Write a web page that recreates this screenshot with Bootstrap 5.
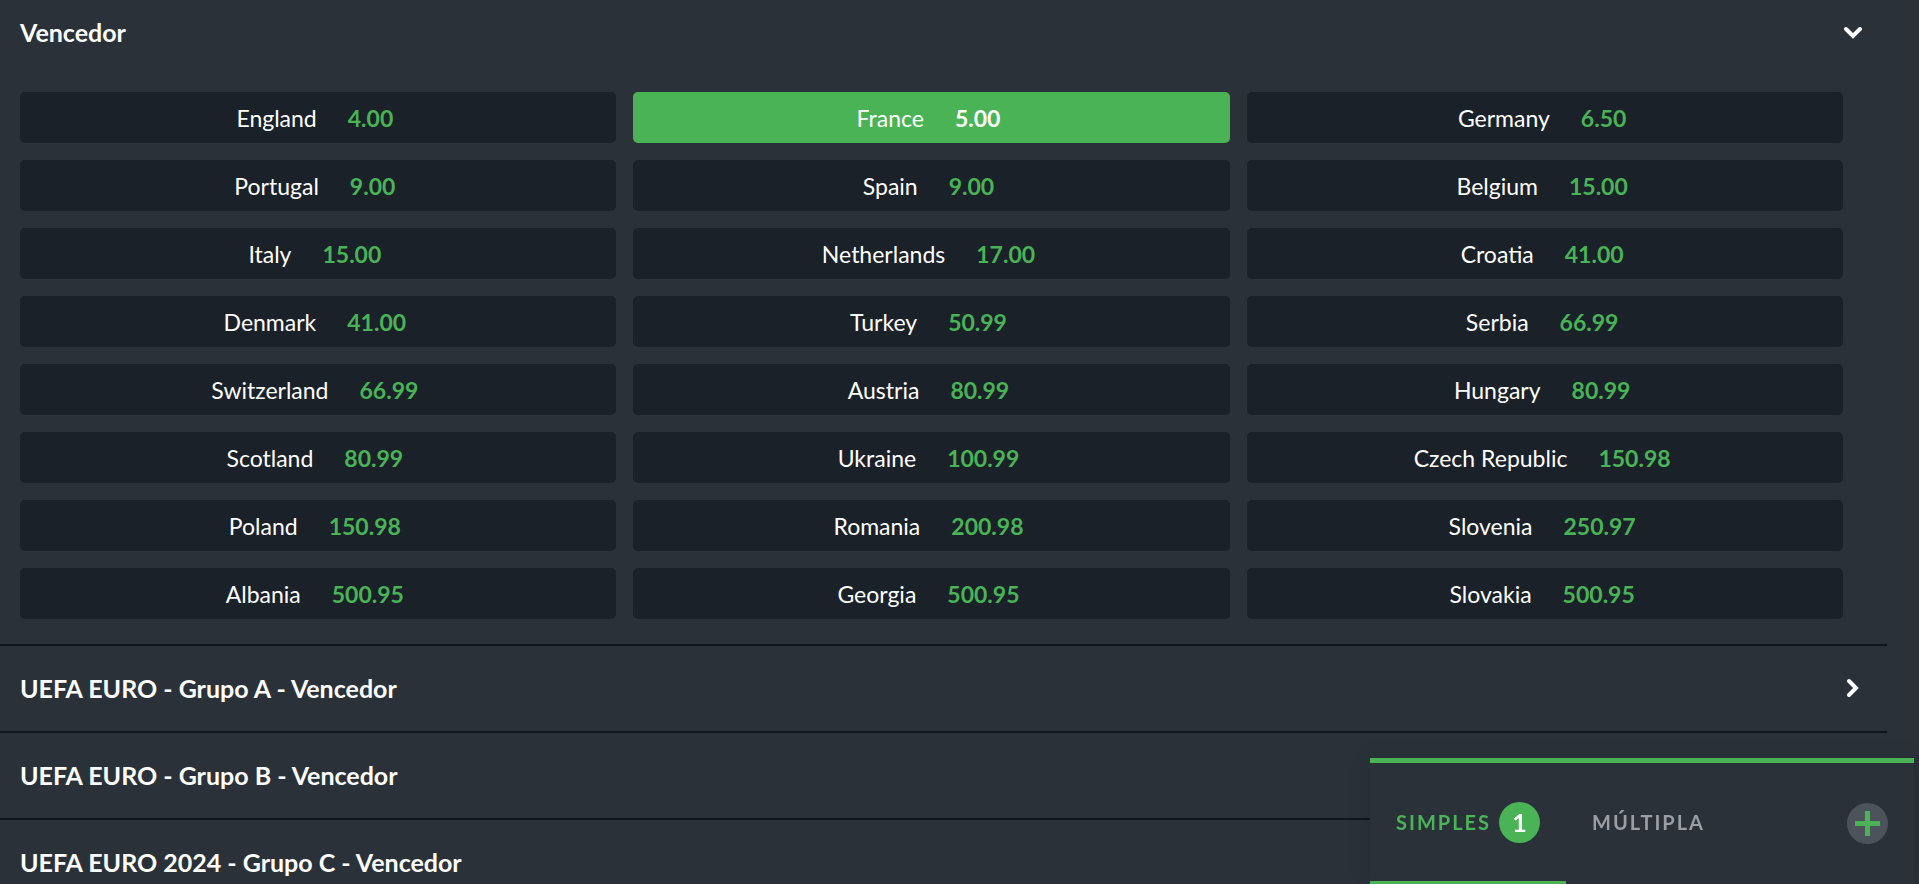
<!DOCTYPE html>
<html lang="pt-BR">
<head>
<meta charset="utf-8">
<meta name="viewport" content="width=device-width, initial-scale=1">
<title>UEFA EURO - Vencedor</title>
<link href="https://cdn.jsdelivr.net/npm/bootstrap@5.3.0/dist/css/bootstrap.min.css" rel="stylesheet">
<style>
  :root { --page: #2b3139; --cell: #1a2129; --line: #10151c; --accent: #49b356; }
  body { background: var(--page); color: #fff; font-family: Lato, "Liberation Sans", sans-serif; font-size: 23px; line-height: 28px; font-variant-ligatures: none; }
  .markets { margin-right: 32px; padding-bottom: 160px; }
  .board { scrollbar-width: none; }
  .board::-webkit-scrollbar { display: none; }
  .market + .market { border-top: 2px solid var(--line); }
  .market-head { width: 100%; padding: 28px 20px 29px; background: none; border: 0; color: #fff; font-weight: 700; font-size: 25px; text-align: left; }
  .market-open .market-head { padding-top: 18px; padding-bottom: 18px; }
  .market-head svg { width: 30px; height: 24px; flex: none; }
  .odds-grid { --bs-gutter-x: 17px; --bs-gutter-y: 17px; margin-right: 0; margin-left: 0; padding: 28px 35px 25px 11px; }
  .pick { width: 100%; height: 51px; gap: 31px; padding: 0 6px 0 0; background: var(--cell); border: 0; border-radius: 5px; color: #fff; }
  .pick b { color: var(--accent); font-weight: 700; }
  .pick[aria-pressed="true"] { background: var(--accent); }
  .pick[aria-pressed="true"] b { color: #fff; }
  .slip { right: 5px; bottom: 0; width: 544px; height: 126px; background: var(--page); border-top: 5px solid var(--accent); box-shadow: 0 0 20px rgba(0, 0, 0, .12); }
  .slip-tab { padding: 0 26px; background: none; border: 0; border-bottom: 3px solid transparent; color: #9a9ea3; font-weight: 700; font-size: 20px; letter-spacing: 2px; }
  .slip-tab[aria-selected="true"] { color: var(--accent); border-color: var(--accent); gap: 8px; }
  .count { width: 41px; height: 41px; background: var(--accent); color: #fff; font-size: 25px; letter-spacing: 0; }
  .add { width: 41px; height: 41px; margin-right: 26px; background: #4d535b; border: 0; }
</style>
</head>
<body>
<main class="board vh-100 overflow-auto">
  <div class="markets">
    <section class="market market-open">
      <button type="button" class="market-head d-flex align-items-center justify-content-between" aria-expanded="true">Vencedor
        <svg viewBox="0 0 30 24" fill="none" stroke="#fff" stroke-width="4" stroke-linecap="round" aria-hidden="true"><path d="M9 9l7 7 7-7"/></svg>
      </button>
      <div class="odds-grid row row-cols-3" id="odds"></div>
    </section>
    <section class="market">
      <button type="button" class="market-head d-flex align-items-center justify-content-between" aria-expanded="false">UEFA EURO - Grupo A - Vencedor
        <svg viewBox="0 0 30 24" fill="none" stroke="#fff" stroke-width="4" stroke-linecap="round" aria-hidden="true"><path d="M12 5l7 7-7 7"/></svg>
      </button>
    </section>
    <section class="market">
      <button type="button" class="market-head d-flex align-items-center justify-content-between" aria-expanded="false">UEFA EURO - Grupo B - Vencedor</button>
    </section>
    <section class="market">
      <button type="button" class="market-head d-flex align-items-center justify-content-between" aria-expanded="false">UEFA EURO 2024 - Grupo C - Vencedor</button>
    </section>
  </div>
</main>
<aside class="slip position-fixed d-flex" aria-label="Boletim de apostas">
  <div class="d-flex flex-grow-1" role="tablist">
    <button type="button" role="tab" aria-selected="true" class="slip-tab d-flex align-items-center">SIMPLES <span class="count rounded-circle d-flex align-items-center justify-content-center">1</span></button>
    <button type="button" role="tab" aria-selected="false" class="slip-tab">MÚLTIPLA</button>
  </div>
  <button type="button" class="add rounded-circle p-0 align-self-center d-flex align-items-center justify-content-center" aria-label="Adicionar">
    <svg width="25" height="25" viewBox="0 0 25 25" stroke="#49b356" stroke-width="5" aria-hidden="true"><path d="M12.5 0v25M0 12.5h25"/></svg>
  </button>
</aside>
<script src="https://cdn.jsdelivr.net/npm/bootstrap@5.3.0/dist/js/bootstrap.bundle.min.js"></script>
<script>
  const teams = [
    ["England", "4.00"], ["France", "5.00"], ["Germany", "6.50"],
    ["Portugal", "9.00"], ["Spain", "9.00"], ["Belgium", "15.00"],
    ["Italy", "15.00"], ["Netherlands", "17.00"], ["Croatia", "41.00"],
    ["Denmark", "41.00"], ["Turkey", "50.99"], ["Serbia", "66.99"],
    ["Switzerland", "66.99"], ["Austria", "80.99"], ["Hungary", "80.99"],
    ["Scotland", "80.99"], ["Ukraine", "100.99"], ["Czech Republic", "150.98"],
    ["Poland", "150.98"], ["Romania", "200.98"], ["Slovenia", "250.97"],
    ["Albania", "500.95"], ["Georgia", "500.95"], ["Slovakia", "500.95"]
  ];
  document.getElementById("odds").innerHTML = teams.map(([name, odd]) =>
    `<div class="col"><button type="button" class="pick d-flex align-items-center justify-content-center" aria-pressed="${name === "France"}"><span>${name}</span><b>${odd}</b></button></div>`
  ).join("");
</script>
</body>
</html>
